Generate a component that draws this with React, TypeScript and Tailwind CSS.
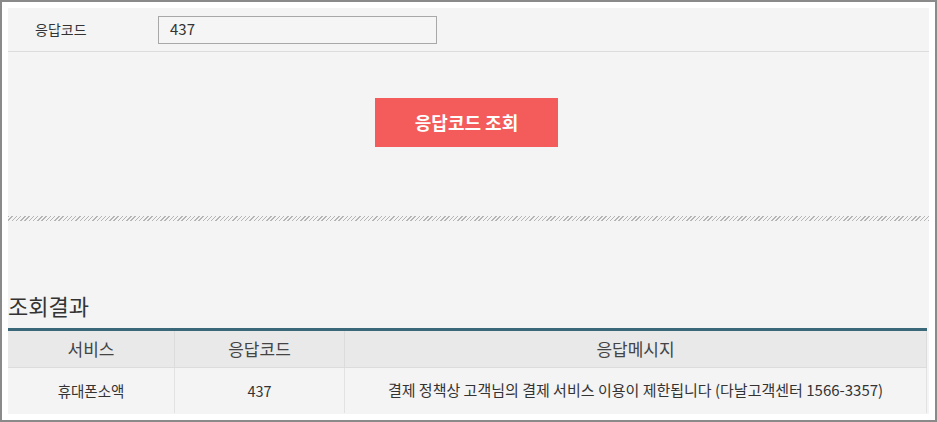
const font = "font-['Noto_Sans_CJK_KR','Noto_Sans',sans-serif]";

export default function App() {
  return (
    <div className={`w-[937px] h-[422px] border-2 border-[#8a8a8a] bg-white p-[6px] ${font}`}>
      <div className="flex h-full flex-col bg-[#f4f4f4]">
        {/* search form */}
        <div className="flex h-[44px] items-center border-b border-[#dcdcdc] pl-[27px]">
          <div className="w-[123px] text-[14px] text-[#333]">응답코드</div>
          <div className="flex h-[28px] w-[279px] items-center border border-[#a8a8a8] bg-[#f5f5f5] pl-[11px] text-[15px] text-[#333]">
            437
          </div>
        </div>

        <button className="ml-[367px] mt-[46px] h-[49px] w-[183px] bg-[#f35c5a] text-[18px] font-bold text-white">
          응답코드 조회
        </button>

        <div className="mt-[69px] h-[5px] w-full bg-[repeating-linear-gradient(-45deg,#b5b5b5_0px,#b5b5b5_1px,transparent_1px,transparent_3px)]" />

        {/* result */}
        <h2 className="mt-[69px] h-[30px] text-[22px] leading-[30px] text-[#333]">조회결과</h2>
        <div className="mt-[8px] mr-[2px] border-t-[3px] border-[#3b6878]">
          <div className="grid h-[37px] grid-cols-[167px_170px_1fr] border-b border-[#dcdcdc] bg-[#e9e9e9] text-[17px] text-[#444]">
            <div className="flex items-center justify-center border-r border-[#dcdcdc]">서비스</div>
            <div className="flex items-center justify-center border-r border-[#dcdcdc]">응답코드</div>
            <div className="flex items-center justify-center border-r border-[#dcdcdc]">응답메시지</div>
          </div>
          <div className="grid h-[45px] grid-cols-[167px_170px_1fr] text-[14.5px] text-[#333]">
            <div className="flex items-center justify-center border-r border-[#e2e2e2]">휴대폰소액</div>
            <div className="flex items-center justify-center border-r border-[#e2e2e2]">437</div>
            <div className="flex items-center justify-center border-r border-[#e2e2e2] text-[15px]">
              결제 정책상 고객님의 결제 서비스 이용이 제한됩니다 (다날고객센터 1566-3357)
            </div>
          </div>
        </div>
      </div>
    </div>
  );
}
